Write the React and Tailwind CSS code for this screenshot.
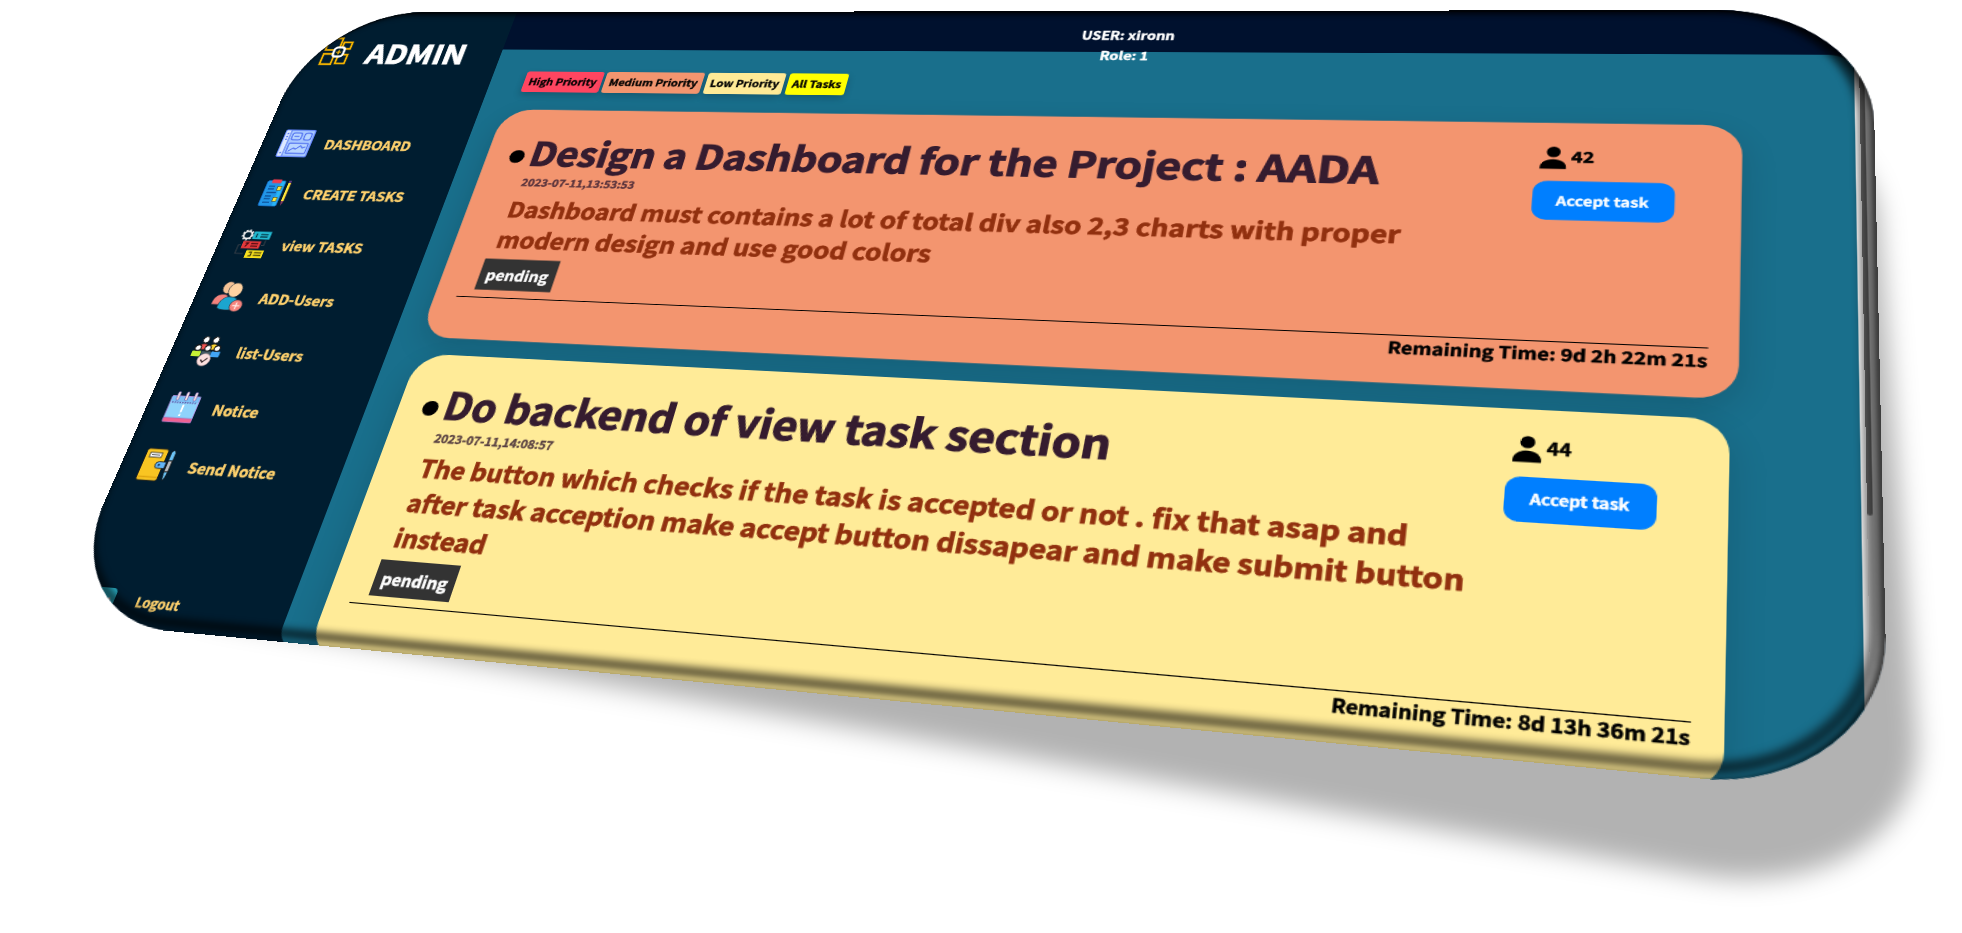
function LogoIcon() {
  return (
    <svg viewBox="0 0 36 40" className="h-10 w-9 shrink-0" fill="none">
      <g stroke="#f5b400" strokeWidth="2.400">
        <path d="M4 1.500h16v16H4z" />
        <path d="M23 7h10v9H23z" />
        <path d="M4 23h13v14H4z" />
        <path d="M22 24h11v12H22z" />
      </g>
      <rect x="15" y="14" width="12" height="12.500" rx="3.500" fill="#001d30" stroke="#ffffff" strokeWidth="2.800" />
      <path d="M21 17.500v6M18 20.500h6" stroke="#f5b400" strokeWidth="1.600" />
    </svg>
  );
}

function DashboardIcon() {
  return (
    <svg viewBox="0 0 36 36" className="size-9 shrink-0">
      <rect x="0.700" y="0.700" width="34.600" height="34.600" rx="1.500" fill="#a9c9ff" stroke="#5b7cf2" strokeWidth="1.400" />
      <rect x="1.400" y="1.400" width="5.600" height="33.200" fill="#dce9ff" />
      <path d="M7 1v34" stroke="#5b7cf2" strokeWidth="1.200" />
      <path d="M3 5.500h2.200M3 9.500h2.200M3 13h2.200M3 30.500h2.200" stroke="#4f6ff0" strokeWidth="1.500" />
      <g fill="#b9d6ff" stroke="#4f6ff0" strokeWidth="1.400">
        <rect x="10" y="4.500" width="11" height="9" rx="2.500" />
        <rect x="24.500" y="4.500" width="8" height="9" rx="2.500" />
        <rect x="10" y="18" width="22.500" height="13" rx="1" />
      </g>
      <path d="M12.500 9h6M12 28.500l5-4.500 3 1.500 4.500-4.500 3 3 3-1.500" fill="none" stroke="#4f6ff0" strokeWidth="1.400" />
    </svg>
  );
}

function CreateIcon() {
  return (
    <svg viewBox="0 0 36 36" className="size-9 shrink-0">
      <rect x="4.500" y="2.500" width="21" height="32" rx="2" fill="#2196e8" stroke="#1565b8" strokeWidth="1" />
      <path d="M22.500 3v31" stroke="#29b6f6" strokeWidth="4" />
      <rect x="9.500" y="0.800" width="11" height="4.600" rx="1" fill="#ef3b4d" />
      <path d="M8 9.500h7M8 13h7M8 17.500h11M8 22h7M8 25.500h7M8 30h8" stroke="#0d4f96" strokeWidth="1.300" />
      <rect x="18.500" y="9.500" width="4.500" height="5" fill="#ffe83b" stroke="#4a4a20" strokeWidth="0.700" />
      <rect x="18.500" y="23.500" width="4.500" height="5" fill="#ffe83b" stroke="#4a4a20" strokeWidth="0.700" />
      <path d="M30.500 2v3" stroke="#5c3b7c" strokeWidth="3" />
      <path d="M30.500 5v23" stroke="#ffe83b" strokeWidth="3" />
      <path d="M32.200 5v23" stroke="#5c3b2c" strokeWidth="0.700" />
      <path d="M29 28h3l-1.500 6z" fill="#8b3a62" />
    </svg>
  );
}

function ViewIcon() {
  return (
    <svg viewBox="0 0 36 36" className="size-9 shrink-0">
      <circle cx="8" cy="7" r="4.600" fill="none" stroke="#f3f3f3" strokeWidth="2" />
      <circle cx="8" cy="7" r="6" fill="none" stroke="#f3f3f3" strokeWidth="1.500" strokeDasharray="2 2" />
      <rect x="14.500" y="2.500" width="20" height="9.500" fill="#22b8cf" />
      <path d="M18.500 5v5M23 6h8.500M23 9h8.500" stroke="#063a4a" strokeWidth="1.500" />
      <rect x="6" y="14.500" width="20.500" height="9" fill="#e5383b" />
      <path d="M9.500 17h3l-2.500 4.500M16 17.500h8M16 20.500h8" fill="none" stroke="#4a0a10" strokeWidth="1.500" />
      <rect x="14" y="25.500" width="20" height="9.500" fill="#f7e01d" />
      <path d="M17.500 28h3v4.500h-3M23.500 28.500h8.500M23.500 31.500h8.500" fill="none" stroke="#4a4208" strokeWidth="1.500" />
      <path d="M31 13v6.500h-3M5 19.500H2V30h9" fill="none" stroke="#3a4149" strokeWidth="1.100" />
    </svg>
  );
}

function AddUsersIcon() {
  return (
    <svg viewBox="0 0 36 36" className="size-9 shrink-0" stroke="#1d2b36" strokeWidth="0.700">
      <path d="M0 27c0-8 4-11.500 10-11.500 4 0 6 2 6 5L13 28H0z" fill="#f4837d" />
      <ellipse cx="12.500" cy="7.500" rx="6.500" ry="7.200" fill="#f5c396" />
      <path d="M8 31c0-9 4.500-13 11-13s11 4 11 13c0 4-22 4-22 0z" fill="#1ba5cf" />
      <ellipse cx="21" cy="10" rx="7.600" ry="8.500" fill="#ffd3a1" />
      <circle cx="28.500" cy="28.500" r="7" fill="#f4837d" />
      <path d="M28.500 24.500v8M24.500 28.500h8" stroke="#ffe9e4" strokeWidth="1.600" />
    </svg>
  );
}

function ListUsersIcon() {
  return (
    <svg viewBox="0 0 36 36" className="size-9 shrink-0">
      <g stroke="#181818" strokeWidth="1">
        <path d="M7 17c0-5 2-7 5.500-7s5.500 2 5.500 7z" fill="#ef5350" />
        <path d="M18 17c0-5 2-7 5.500-7s5.500 2 5.500 7z" fill="#fdd835" />
        <path d="M9 5.500a3.500 4 0 0 1 7 0a3.500 3.600 0 0 1-7 0zM20 5.500a3.500 4 0 0 1 7 0a3.500 3.600 0 0 1-7 0z" fill="#ffffff" />
      </g>
      <rect x="2" y="18.500" width="10" height="6.500" rx="1" fill="#c6f135" />
      <rect x="12.500" y="18.500" width="10.500" height="5" rx="1" fill="#455a64" />
      <rect x="23.500" y="18.500" width="10" height="6.500" rx="1" fill="#42a5f5" />
      <g fill="#ffffff" stroke="#181818" strokeWidth="1.200">
        <circle cx="7" cy="15" r="3.300" />
        <circle cx="18" cy="15" r="3.300" />
        <circle cx="28.500" cy="15" r="3.300" />
      </g>
      <g fill="#181818">
        <path d="M3.700 14.500a3.400 3.400 0 0 1 4-3.200zM14.700 14.500a3.400 3.400 0 0 1 4-3.200zM25.200 14.500a3.400 3.400 0 0 1 4-3.200zM9 5a3.400 3.400 0 0 1 4-3.400zM20 5a3.400 3.400 0 0 1 4-3.400z" />
      </g>
      <circle cx="18.500" cy="28.500" r="7" fill="#fde0df" stroke="#c9a3a3" strokeWidth="0.600" />
      <path d="M15 28.500l2.800 2.800 4.500-5" fill="none" stroke="#37272b" strokeWidth="1.300" />
    </svg>
  );
}

function NoticeIcon() {
  return (
    <svg viewBox="0 0 36 36" className="size-9 shrink-0">
      <rect x="2" y="5.500" width="31.500" height="29" rx="1" fill="#8fd3fb" stroke="#a78bda" strokeWidth="1" />
      <path d="M2.500 6h30.500v6H2.500z" fill="#7cc0f5" />
      <path d="M4 12.800h28" stroke="#5d4fa2" strokeWidth="1.600" strokeDasharray="1.600 1.200" />
      <rect x="2" y="30" width="31.500" height="4.800" rx="1" fill="#f06292" stroke="#8e6fc0" strokeWidth="0.600" />
      <path d="M8.500 2v7M18 2v7M27.500 2v7" stroke="#6b5aa6" strokeWidth="3.600" strokeLinecap="round" />
      <path d="M8.500 2v7M18 2v7M27.500 2v7" stroke="#f6dfe2" strokeWidth="2.200" strokeLinecap="round" />
      <path d="M18 15v8.500M18 25.500v2.500" stroke="#ffffff" strokeWidth="2.200" />
    </svg>
  );
}

function SendNoticeIcon() {
  return (
    <svg viewBox="0 0 36 36" className="size-9 shrink-0">
      <rect x="0.500" y="0.800" width="23" height="34.500" rx="2.500" fill="#f9c522" stroke="#1a1a1a" strokeWidth="0.900" />
      <path d="M1.300 31.500h21.500" stroke="#dfa510" strokeWidth="1.500" />
      <rect x="5" y="5" width="13" height="5" fill="#ffffff" stroke="#333333" strokeWidth="0.900" />
      <path d="M7 7.500h9" stroke="#444444" strokeWidth="0.900" />
      <path d="M26 14.500h-7.500a3.600 3.600 0 0 0 0 7.200H26z" fill="#64b5f6" stroke="#1a1a1a" strokeWidth="0.900" />
      <circle cx="19" cy="18.100" r="1.400" fill="#1c4a78" />
      <g stroke="#111111" strokeWidth="0.800">
        <path d="M27.300 13V4q2.400-5 4.800 0v9z" fill="#6cc3f5" />
        <path d="M27.600 13h4.200v12h-4.200z" fill="#b9bcc0" />
        <path d="M27.600 25h4.200l-1 7-1.100 2.500-1.100-2.500z" fill="#6cc3f5" />
      </g>
    </svg>
  );
}

function LogoutIcon() {
  return (
    <svg viewBox="0 0 36 36" className="mt-3 size-9 shrink-0">
      <rect x="0" y="0" width="35" height="36" rx="5" fill="#2bb3c9" />
      <path d="M29 11v16" stroke="#c9a9a6" strokeWidth="3" strokeLinecap="round" />
    </svg>
  );
}

function PersonIcon() {
  return (
    <svg viewBox="0 0 22 24.500" className="h-[24.5px] w-[22px]" fill="#000000">
      <circle cx="11" cy="5.900" r="5.700" />
      <path d="M0 24.500V23c0-5.500 5-9.300 11-9.300S22 17.500 22 23v1.500z" />
    </svg>
  );
}

const menu = [
  { label: "DASHBOARD", Icon: DashboardIcon },
  { label: "CREATE TASKS", Icon: CreateIcon },
  { label: "view TASKS", Icon: ViewIcon },
  { label: "ADD-Users", Icon: AddUsersIcon },
  { label: "list-Users", Icon: ListUsersIcon },
  { label: "Notice", Icon: NoticeIcon },
  { label: "Send Notice", Icon: SendNoticeIcon },
];

const filters = [
  { label: "High Priority", tone: "bg-[#ff4560]" },
  { label: "Medium Priority", tone: "bg-[#f3956f]" },
  { label: "Low Priority", tone: "bg-[#ffea96]" },
  { label: "All Tasks", tone: "bg-[#ffff00]" },
];

const tasks = [
  {
    id: 42,
    tone: "scale-[1.01] bg-[#f3956f] pb-[26px]",
    title: "Design a Dashboard for the Project : AADA",
    date: "2023-07-11,13:53:53",
    lines: ["Dashboard must contains a lot of total div also 2,3 charts with proper", "modern design and use good colors"],
    left: "9d 2h 22m 21s",
  },
  {
    id: 44,
    tone: "relative z-10 bg-[#ffeb98] pb-8",
    title: "Do backend of view task section",
    date: "2023-07-11,14:08:57",
    lines: [
      "The button which checks if the task is accepted or not . fix that asap and",
      "after task acception make accept button dissapear and make submit button",
      "instead",
    ],
    left: "8d 13h 36m 21s",
  },
];

function Sidebar() {
  return (
    <aside className="flex w-[235px] shrink-0 flex-col bg-[#001d30] text-[#ffd26e]">
      <div className="flex h-[110px] items-center gap-5 pl-[23px]">
        <LogoIcon />
        <span className="pt-px text-[35.3px] leading-none text-white">ADMIN</span>
      </div>
      <nav className="mt-9 flex flex-col">
        {menu.map(({ label, Icon }) => (
          <div key={label} className="flex h-[64.1px] items-center gap-4 pl-[22px] text-base">
            <Icon />
            <span>{label}</span>
          </div>
        ))}
      </nav>
      <div className="mt-auto mb-[5px] flex h-10 items-center gap-[22px] pl-5 text-[13.333px]">
        <LogoutIcon />
        <span>Logout</span>
      </div>
    </aside>
  );
}

function TaskCard({ task }) {
  return (
    <article className={`flex w-[1158.6px] shrink-0 flex-col rounded-[32px] shadow-[0_10px_30px_rgba(0,0,0,0.14)] ${task.tone}`}>
      <div className="flex">
        <div className="flex w-[992.5px] flex-col items-start pt-[33px]">
          <h2 className="flex items-center gap-1.5 pl-[25px] text-[40px] leading-10 text-[#351c2f]">
            <span className="mt-3 size-4 rounded-full bg-black" />
            <span>{task.title}</span>
          </h2>
          <p className="mt-2 pl-12 text-xs leading-[18px] text-[#351c2f]/80">{task.date}</p>
          <div className="mt-[4.5px] pl-[44.5px] text-[25px] leading-9 whitespace-nowrap text-[#91300f]">
            {task.lines.map((line) => (
              <p key={line}>{line}</p>
            ))}
          </div>
          <span className="mt-1.5 ml-[39px] flex h-9 items-center bg-[#333333] px-[7px] text-base text-white">pending</span>
        </div>
        <div className="flex flex-col items-start pt-[25.5px]">
          <div className="flex h-[24.5px] items-center gap-1 pl-1 text-base leading-5">
            <PersonIcon />
            <span className="-mt-1">{task.id}</span>
          </div>
          <button className="mt-[13px] flex h-[41px] w-[114px] items-center justify-center rounded-xl bg-[#007fff] text-[13.333px] font-bold text-white">
            Accept task
          </button>
        </div>
      </div>
      <div className="mx-[23px] mt-2 border-t border-black pt-px text-right text-base leading-5">
        <span>Remaining Time: {task.left}</span>
      </div>
    </article>
  );
}

export default function App() {
  return (
    <div className="relative h-[933px] w-[1962px] overflow-hidden bg-white font-['Noto_Sans_CJK_JP','Noto_Sans',sans-serif] font-bold text-black [&_button]:[-webkit-text-stroke:0.03em] [&_p]:[-webkit-text-stroke:0.03em] [&_span]:[-webkit-text-stroke:0.03em]">
      <div className="absolute inset-0 blur-[13px]">
        <div className="h-[730px] w-[1536px] origin-top-left [transform:matrix3d(0.66204,0.007487,0,-0.00018561,-0.36945,0.59507,0,-0.00022189,0,0,1,0,320,60,0,1)]">
          <div className="ml-16 h-[730px] rounded-[130px] bg-black/30" />
        </div>
      </div>
      <div className="relative flex h-[730px] w-[1536px] origin-top-left overflow-hidden rounded-[125px] bg-[#001d30] [transform:matrix3d(0.774479,-0.00292969,0,-0.0001261133,-0.376986,0.702192,0,-0.000209589,0,0,1,0,319.7,12.4,0,1)]">
        <Sidebar />
        <div className="flex h-[735px] w-[1301px] flex-col">
          <header className="relative z-10 flex h-[51px] shrink-0 flex-col items-center bg-[#00112e] pt-[18px] pl-0.5 text-sm leading-[24.6px] text-white">
            <span className="shrink-0">USER: xironn</span>
            <span className="shrink-0">Role: 1</span>
          </header>
          <div className="flex h-[684px]">
            <main className="flex w-[1286px] flex-col overflow-hidden rounded-[20px] rounded-tl-none bg-[#196f8c] pl-[33.2px]">
              <div className="mt-[29.2px] ml-[5px] flex gap-[3.7px] text-xs">
                {filters.map((f) => (
                  <span key={f.label} className={`flex h-[26.5px] items-center rounded-[3px] px-[5px] shadow-[0_4px_8px_rgba(0,0,0,0.2)] ${f.tone}`}>
                    {f.label}
                  </span>
                ))}
              </div>
              <div className="mt-[24.5px] flex flex-col gap-5">
                {tasks.map((t) => (
                  <TaskCard key={t.id} task={t} />
                ))}
              </div>
            </main>
            <div className="w-[15px] bg-white pl-1">
              <div className="h-[453px] w-[3.5px] rounded-b-full bg-[#868686]" />
            </div>
          </div>
        </div>
        <div className="absolute top-[-4px] left-[-9px] z-20 h-[730px] w-[1542px] rounded-[125px] border-[9px] border-black/65 blur-[3.5px]" />
        <div className="absolute inset-0 z-20 rounded-[125px] border-t-2 border-black/60 shadow-[inset_-5px_0_4px_-1px_rgba(0,0,0,0.75)]" />
      </div>
    </div>
  );
}
